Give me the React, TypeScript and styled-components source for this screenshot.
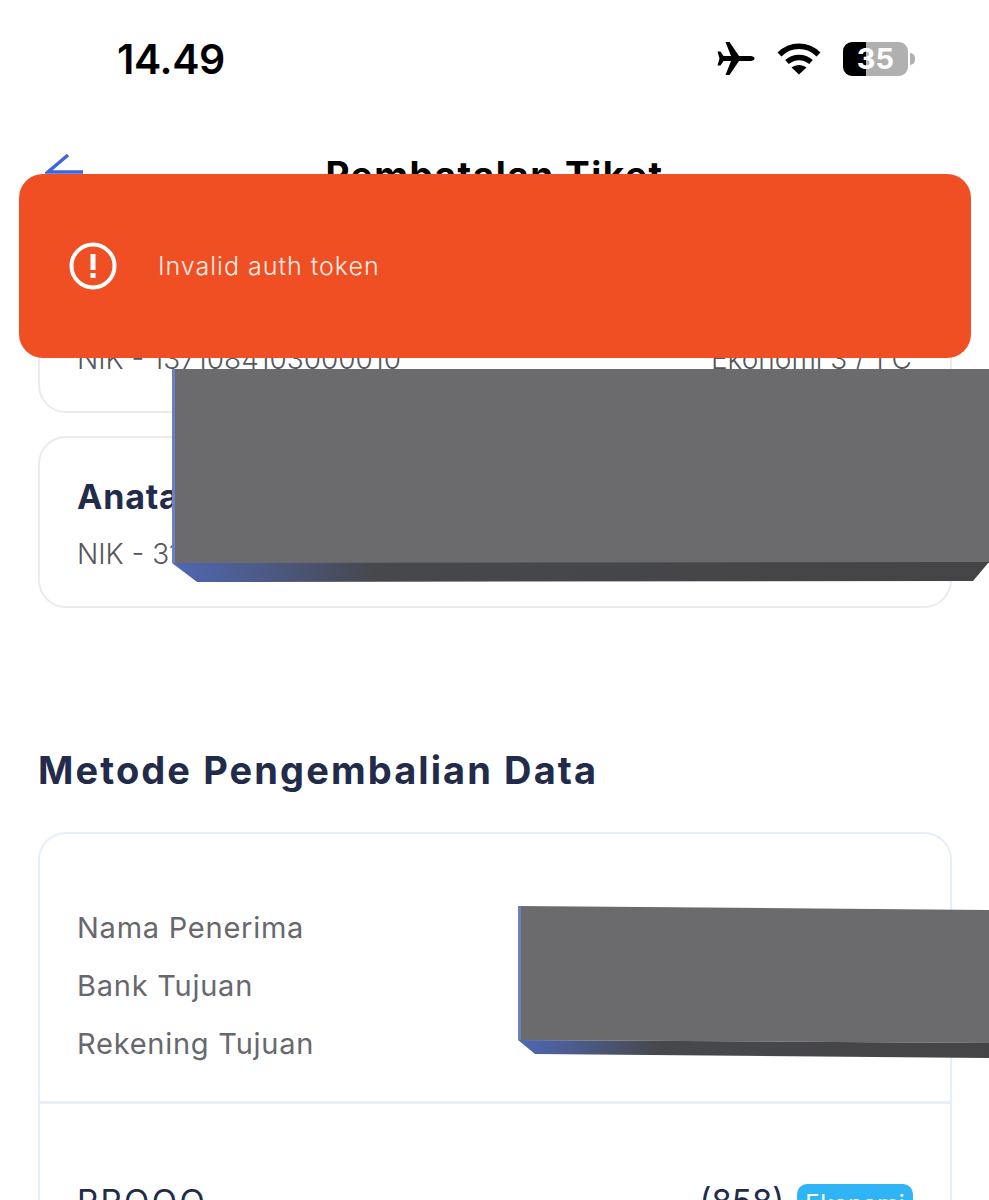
import React from 'react';
import styled, { createGlobalStyle } from 'styled-components';

const GlobalStyle = createGlobalStyle`
  html, body {
    margin: 0;
    padding: 0;
    background: #ffffff;
  }
  body {
    font-family: "Inter", "Liberation Sans", sans-serif;
  }
`;

const Page = styled.div`
  position: relative;
  width: 989px;
  height: 1200px;
  overflow: hidden;
  background: #ffffff;
`;

const StatusBar = styled.div`
  height: 120px;
  display: flex;
  align-items: center;
  justify-content: space-between;
  padding: 0 74px 3px 117px;
  box-sizing: border-box;
`;

const Clock = styled.div`
  font-size: 41px;
  font-weight: 600;
  color: #000000;
  letter-spacing: -0.4px;
`;

const StatusIcons = styled.div`
  display: flex;
  align-items: center;
  gap: 22px;
  color: #000000;
`;

const Battery = styled.div`
  position: relative;
  width: 65px;
  height: 34px;
  border-radius: 9px;
  overflow: hidden;
  display: flex;
  align-items: center;
  justify-content: center;
  background: linear-gradient(90deg, #000000 0 23px, #b0b0b0 23px 100%);
  color: #ffffff;
  font-size: 29px;
  font-weight: 700;
`;

const BatteryWrap = styled.div`
  display: flex;
  align-items: center;
  gap: 2px;
  &:after {
    content: "";
    width: 5px;
    height: 12px;
    border-radius: 0 6px 6px 0;
    background: #b0b0b0;
  }
`;

const Header = styled.header`
  height: 84px;
  box-sizing: border-box;
  padding: 35px 0 0;
  display: flex;
  align-items: flex-start;
  position: relative;
`;

const BackIcon = styled.svg`
  position: absolute;
  left: 45px;
  top: 33px;
`;

const Title = styled.h1`
  flex: 1;
  margin: 0;
  text-align: center;
  font-size: 37px;
  line-height: 40px;
  font-weight: 700;
  color: #000000;
  letter-spacing: 1.5px;
`;

const Passengers = styled.div`
  margin-top: 37px;
  padding: 0 37px 0 38px;
  display: flex;
  flex-direction: column;
  gap: 23px;
`;

const PassengerCard = styled.div`
  height: 172px;
  box-sizing: border-box;
  border: 2px solid #e9ebef;
  border-radius: 28px;
  padding: 0 38px 36px 37px;
  display: flex;
  flex-direction: column;
  justify-content: flex-end;
  gap: 21px;
`;

const PassengerName = styled.div`
  font-size: 34px;
  line-height: 40px;
  font-weight: 700;
  color: #222b4a;
  letter-spacing: 0.8px;
`;

const PassengerMeta = styled.div`
  display: flex;
  justify-content: space-between;
  font-size: 28px;
  line-height: 32px;
  font-weight: 300;
  color: #55565c;
`;

const SectionTitle = styled.h2`
  margin: 140px 0 40px 38px;
  font-size: 38px;
  line-height: 44px;
  font-weight: 700;
  color: #222b4a;
  letter-spacing: 2.1px;
`;

const RefundCard = styled.div`
  margin: 0 37px 0 38px;
  border: 2px solid #e6eef9;
  border-radius: 28px;
  height: 500px;
`;

const RefundRows = styled.div`
  height: 270px;
  box-sizing: border-box;
  padding: 76px 38px 0 37px;
  border-bottom: 3px solid #e8eff9;
  display: flex;
  flex-direction: column;
  gap: 22px;
`;

const RefundLabel = styled.div`
  font-size: 29px;
  line-height: 36px;
  font-weight: 400;
  color: #67686e;
  letter-spacing: 0.75px;
`;

const TrainRow = styled.div`
  display: flex;
  justify-content: space-between;
  align-items: flex-start;
  padding: 80px 37px 0;
`;

const TrainName = styled.div`
  font-size: 33px;
  line-height: 34px;
  color: #222b4a;
  letter-spacing: 2.4px;
`;

const TrainClass = styled.div`
  display: flex;
  align-items: flex-start;
  gap: 13px;
`;

const TrainCode = styled.div`
  font-size: 33px;
  line-height: 34px;
  color: #222b4a;
`;

const ClassBadge = styled.div`
  background: #2fb5f6;
  border-radius: 10px;
  color: #ffffff;
  font-size: 24px;
  line-height: 32px;
  padding: 4px 8px 0;
  letter-spacing: 0.4px;
`;

const Toast = styled.div`
  position: absolute;
  left: 19px;
  top: 174px;
  width: 952px;
  height: 184px;
  box-sizing: border-box;
  background: #f04e23;
  border-radius: 24px;
  padding: 0 0 0 50px;
  display: flex;
  align-items: center;
  gap: 41px;
`;

const ToastText = styled.div`
  font-size: 25px;
  font-weight: 300;
  color: #fdeee8;
  letter-spacing: 1px;
`;

const Redaction = styled.svg<{ $left: number; $top: number }>`
  position: absolute;
  left: ${(p) => p.$left}px;
  top: ${(p) => p.$top}px;
  filter: blur(0.5px);
`;

const PlaneIcon = () => (
  <svg width="38" height="33" viewBox="0 0 38 33" fill="#000">
    <path d="M37.5 16.5C37.5 14.5 34.5 14 32 14L22 14L12.5 0L8.5 0L14 14L6.5 14L3.5 9.5L0.5 9.5L2.5 16.5L0.5 23.5L3.5 23.5L6.5 19L14 19L8.5 33L12.5 33L22 19L32 19C34.5 19 37.5 18.5 37.5 16.5Z" />
  </svg>
);

const WifiIcon = () => (
  <svg width="44" height="33" viewBox="0 0 44 33" fill="none" stroke="#000" strokeWidth="5.5">
    <path d="M2.5 12.5C13.5 1.5 30.5 1.5 41.5 12.5" />
    <path d="M10 20C17 14 27 14 34 20" />
    <path d="M22 32.5L14.5 25.5C19 22 25 22 29.5 25.5Z" fill="#000" stroke="none" />
  </svg>
);

const AlertIcon = () => (
  <svg width="48" height="48" viewBox="0 0 48 48" fill="none">
    <circle cx="24" cy="24" r="21.5" stroke="#fff" strokeWidth="4" />
    <rect x="21.5" y="12" width="5" height="16" fill="#fff" />
    <rect x="21.5" y="31" width="5" height="5" fill="#fff" />
  </svg>
);

const TopRedaction = () => (
  <Redaction $left={172} $top={368} width={817} height={214} viewBox="0 0 817 214">
    <defs>
      <linearGradient id="bevelA" x1="0" x2="1" y1="0" y2="0">
        <stop offset="0" stopColor="#4f68b4" />
        <stop offset="0.25" stopColor="#47484c" />
        <stop offset="1" stopColor="#444446" />
      </linearGradient>
    </defs>
    <rect x="0" y="1" width="817" height="194" fill="#6b6b6d" />
    <rect x="0" y="1" width="3" height="194" fill="#6a80c0" />
    <polygon points="0,195 817,194 801,213 25,214" fill="url(#bevelA)" />
  </Redaction>
);

const BottomRedaction = () => (
  <Redaction $left={518} $top={906} width={471} height={152} viewBox="0 0 471 152">
    <defs>
      <linearGradient id="bevelB" x1="0" x2="1" y1="0" y2="0">
        <stop offset="0" stopColor="#4f68b4" />
        <stop offset="0.3" stopColor="#47484c" />
        <stop offset="1" stopColor="#444446" />
      </linearGradient>
    </defs>
    <polygon points="0,0 471,4 471,137 0,134" fill="#6b6b6d" />
    <polygon points="0,0 3,0 3,134 0,134" fill="#6a80c0" />
    <polygon points="0,134 471,137 471,152 17,148" fill="url(#bevelB)" />
  </Redaction>
);

export default function App() {
  return (
    <Page>
      <GlobalStyle />
      <StatusBar>
        <Clock>14.49</Clock>
        <StatusIcons>
          <PlaneIcon />
          <WifiIcon />
          <BatteryWrap>
            <Battery>35</Battery>
          </BatteryWrap>
        </StatusIcons>
      </StatusBar>
      <Header>
        <BackIcon width="40" height="24" viewBox="0 0 40 24" fill="none" stroke="#3b66e0" strokeWidth="3.5">
          <path d="M23 2L3 19H38" />
        </BackIcon>
        <Title>Pembatalan Tiket</Title>
      </Header>
      <Passengers>
        <PassengerCard>
          <PassengerMeta>
            <span>NIK - 1371084103000010</span>
            <span>Ekonomi 3 / 1 C</span>
          </PassengerMeta>
        </PassengerCard>
        <PassengerCard>
          <PassengerName>Anata</PassengerName>
          <PassengerMeta>
            <span>NIK - 31</span>
          </PassengerMeta>
        </PassengerCard>
      </Passengers>
      <SectionTitle>Metode Pengembalian Data</SectionTitle>
      <RefundCard>
        <RefundRows>
          <RefundLabel>Nama Penerima</RefundLabel>
          <RefundLabel>Bank Tujuan</RefundLabel>
          <RefundLabel>Rekening Tujuan</RefundLabel>
        </RefundRows>
        <TrainRow>
          <TrainName>PROOO</TrainName>
          <TrainClass>
            <TrainCode>(858)</TrainCode>
            <ClassBadge>Ekonomi</ClassBadge>
          </TrainClass>
        </TrainRow>
      </RefundCard>
      <Toast>
        <AlertIcon />
        <ToastText>Invalid auth token</ToastText>
      </Toast>
      <TopRedaction />
      <BottomRedaction />
    </Page>
  );
}
